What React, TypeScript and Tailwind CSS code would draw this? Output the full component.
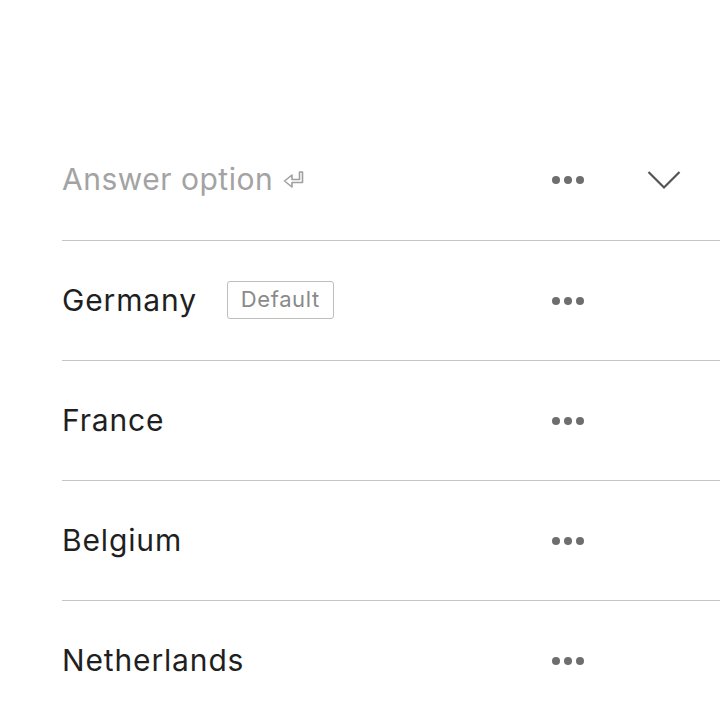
import React from "react";

function Dots() {
  return (
    <div className="flex items-center gap-[4px] w-[32px]">
      <span className="block w-[8px] h-[8px] rounded-full bg-[#6e6e6e]" />
      <span className="block w-[8px] h-[8px] rounded-full bg-[#6e6e6e]" />
      <span className="block w-[8px] h-[8px] rounded-full bg-[#6e6e6e]" />
    </div>
  );
}

function ReturnIcon() {
  return (
    <svg width="21" height="18" viewBox="0 0 21 18" fill="none" className="ml-[10px] mt-[1px]">
      <path
        d="M19.5 1 V11.5 H9 V16 L1.5 10 L9 4 V8.5 H16.5 V1 Z"
        stroke="#a0a0a0"
        strokeWidth="1.6"
        strokeLinejoin="round"
      />
    </svg>
  );
}

function Chevron() {
  return (
    <svg width="34" height="20" viewBox="0 0 34 20" fill="none">
      <path d="M1.5 2 L17 17.5 L32.5 2" stroke="#555555" strokeWidth="2.2" />
    </svg>
  );
}

const items = ["Germany", "France", "Belgium", "Netherlands"];

export default function App() {
  return (
    <div
      className="w-[720px] h-[720px] bg-white overflow-hidden pt-[120px] pl-[62px]"
      style={{ fontFamily: "Inter, 'Noto Sans', sans-serif" }}
    >
      <div className="flex items-center h-[121px] border-b border-[#c6c6c1]">
        <div className="w-[490px] flex items-center pb-[2px]">
          <span className="text-[30px] leading-none text-[#a3a3a3] tracking-[0.5px]">Answer option</span>
          <ReturnIcon />
        </div>
        <Dots />
        <div className="ml-[63px]">
          <Chevron />
        </div>
      </div>
      {items.map((name, i) => (
        <div key={name} className="flex items-center h-[120px] border-b border-[#c6c6c1]">
          <div className="w-[490px] flex items-center pb-[2px]">
            <span className="text-[30px] leading-none text-[#1f1f1f] tracking-[0.85px]">{name}</span>
            {i === 0 && (
              <span className="ml-[30px] h-[38px] px-[13px] flex items-center border-[1.5px] border-[#bdbdb9] rounded-[3px] text-[22px] text-[#8a8a8a] tracking-[0.6px]">
                Default
              </span>
            )}
          </div>
          <Dots />
        </div>
      ))}
    </div>
  );
}
